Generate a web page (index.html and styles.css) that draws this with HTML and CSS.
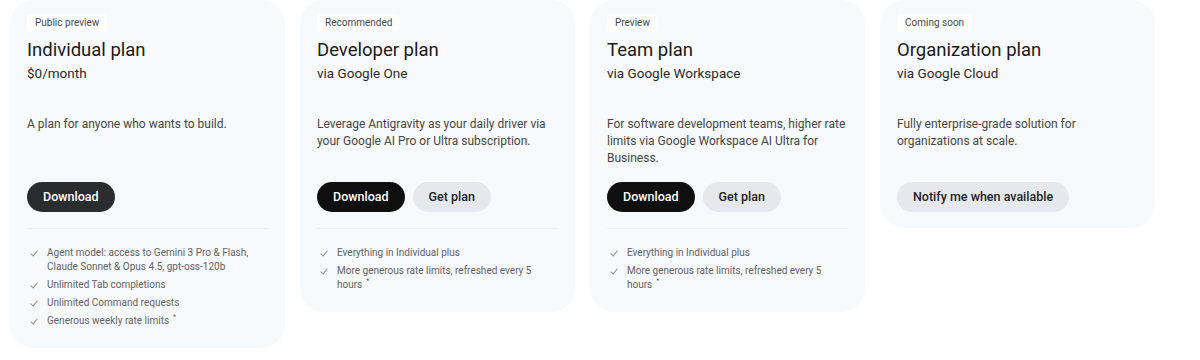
FILE: index.html
```html
<!DOCTYPE html>
<html lang="en">
<head>
    <meta charset="UTF-8">
    <meta name="viewport" content="width=device-width, initial-scale=1.0">
    <title>Plans</title>
    <link rel="stylesheet" href="styles.css">
</head>
<body>

<div class="plans">

    <div class="plan">
        <span class="badge">Public preview</span>
        <h3>Individual plan</h3>
        <p class="via">$0/month</p>
        <p class="desc">A plan for anyone who wants to build.</p>
        <div class="actions">
            <a class="btn btn-dark btn-soft" href="#">Download</a>
        </div>
        <ul class="features">
            <li>Agent model: access to Gemini 3 Pro &amp; Flash, Claude Sonnet &amp; Opus 4.5, gpt-oss-120b</li>
            <li>Unlimited Tab completions</li>
            <li>Unlimited Command requests</li>
            <li>Generous weekly rate limits<span class="mark">*</span></li>
        </ul>
    </div>

    <div class="plan">
        <span class="badge">Recommended</span>
        <h3>Developer plan</h3>
        <p class="via">via Google One</p>
        <p class="desc">Leverage Antigravity as your daily driver via your Google AI Pro or Ultra subscription.</p>
        <div class="actions">
            <a class="btn btn-dark" href="#">Download</a>
            <a class="btn btn-light" href="#">Get plan</a>
        </div>
        <ul class="features">
            <li>Everything in Individual plus</li>
            <li>More generous rate limits, refreshed every 5 hours<span class="mark">*</span></li>
        </ul>
    </div>

    <div class="plan">
        <span class="badge">Preview</span>
        <h3>Team plan</h3>
        <p class="via">via Google Workspace</p>
        <p class="desc">For software development teams, higher rate limits via Google Workspace AI Ultra for Business.</p>
        <div class="actions">
            <a class="btn btn-dark" href="#">Download</a>
            <a class="btn btn-light" href="#">Get plan</a>
        </div>
        <ul class="features">
            <li>Everything in Individual plus</li>
            <li>More generous rate limits, refreshed every 5 hours<span class="mark">*</span></li>
        </ul>
    </div>

    <div class="plan plan-short">
        <span class="badge">Coming soon</span>
        <h3>Organization plan</h3>
        <p class="via">via Google Cloud</p>
        <p class="desc">Fully enterprise-grade solution for organizations at scale.</p>
        <div class="actions">
            <a class="btn btn-light" href="#">Notify me when available</a>
        </div>
    </div>

</div>

</body>
</html>
```

FILE: styles.css
```css
body {
    font-family: Roboto, "Open Sans", sans-serif;
    background: #ffffff;
    margin: 0;
    color: #1f1f1f;
}

.plans {
    display: flex;
    align-items: flex-start;
    gap: 15px;
    padding: 0 10px;
}

.plan {
    width: 275px;
    box-sizing: border-box;
    background-color: #f8f9fb;
    border-radius: 24px;
    padding: 14px 17px 20px;
    display: flex;
    flex-direction: column;
    align-items: flex-start;
}

.plan-short {
    padding-bottom: 16px;
}

.badge {
    background: #ffffff;
    border-radius: 4px;
    font-size: 10px;
    line-height: 18px;
    padding: 0 8px;
    color: #444746;
}

h3 {
    font-size: 18.5px;
    font-weight: 400;
    line-height: 26px;
    margin: 5px 0 0;
    color: #1a1a1a;
}

.via {
    font-size: 13.5px;
    line-height: 20px;
    margin: 0;
    color: #2a2a2a;
}

.desc {
    font-size: 12px;
    line-height: 17px;
    color: #444746;
    margin: 33px 0 15px;
    min-height: 51px;
}

.actions {
    display: flex;
    gap: 8px;
}

.btn {
    display: inline-block;
    font-size: 12.5px;
    font-weight: 500;
    line-height: 30px;
    padding: 0 16px;
    border-radius: 16px;
    text-decoration: none;
}

.btn-dark {
    background-color: #0f0f10;
    color: #ffffff;
}

.btn-soft {
    background-color: #2b2c2e;
}

.btn-light {
    background-color: #e6e8eb;
    color: #1f1f1f;
}

.features {
    list-style: none;
    margin: 16px 0 0;
    padding: 17px 0 0;
    border-top: 1px solid #eceef1;
    width: 100%;
}

.features li {
    position: relative;
    font-size: 10px;
    line-height: 14px;
    color: #5f6368;
    padding-left: 20px;
    margin-bottom: 4px;
}

.features li:last-child {
    margin-bottom: 0;
}

.features li::before {
    content: "";
    position: absolute;
    left: 5px;
    top: 3px;
    width: 3px;
    height: 6px;
    border-right: 1px solid #8a8f94;
    border-bottom: 1px solid #8a8f94;
    transform: rotate(40deg);
}

.mark {
    display: inline-block;
    font-size: 7px;
    line-height: 7px;
    vertical-align: top;
    margin-left: 4px;
}
```
